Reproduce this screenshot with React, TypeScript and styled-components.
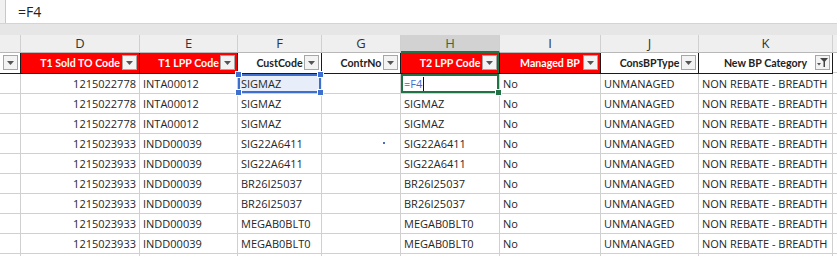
import * as React from 'react';
import styled, { createGlobalStyle, css } from 'styled-components';

const GlobalStyle = createGlobalStyle`
  html, body {
    margin: 0;
    padding: 0;
    background: #ffffff;
    overflow: hidden;
  }
  body {
    font-family: 'Open Sans', 'Noto Sans', 'Liberation Sans', sans-serif;
  }
`;

const COLS = '21px 119px 98px 84px 79px 99px 101px 98px 134px 1fr';

const Window = styled.div`
  width: 837px;
  height: 256px;
  overflow: hidden;
  background: #e6e6e6;
`;

const FormulaBar = styled.div`
  height: 24px;
  display: flex;
  border-bottom: 1px solid #d4d4d4;
  box-sizing: border-box;
`;

const FormulaEdge = styled.div`
  width: 5px;
  background: #f1f1f1;
  border-right: 1px solid #c8c8c8;
`;

const FormulaInput = styled.div`
  flex: 1;
  background: #ffffff;
  padding-left: 12px;
  font-size: 14px;
  line-height: 23px;
  color: #222;
`;

const Gap = styled.div`
  height: 11px;
  background: #e6e6e6;
`;

const Sheet = styled.div`
  display: grid;
  grid-template-columns: ${COLS};
  grid-auto-rows: auto;
  background: #ffffff;
`;

const Letter = styled.div<{ $active?: boolean }>`
  height: 18px;
  box-sizing: border-box;
  background: ${({ $active }) => ($active ? '#d2d2d2' : '#efefef')};
  border-right: 1px solid #d0d0d0;
  border-bottom: ${({ $active }) => ($active ? '2px solid #217346' : '1px solid #b8b8b8')};
  color: ${({ $active }) => ($active ? '#217346' : '#333')};
  font-size: 13px;
  line-height: 17px;
  text-align: center;
`;

const Head = styled.div<{ $red?: boolean; $active?: boolean }>`
  position: relative;
  height: 21px;
  box-sizing: border-box;
  background: ${({ $red }) => ($red ? '#ff0000' : '#ffffff')};
  color: ${({ $red }) => ($red ? '#ffffff' : '#222')};
  border-right: 1px solid #1a1a1a;
  border-bottom: 1px solid #1a1a1a;
  font-family: Lato, 'Open Sans', sans-serif;
  font-size: 10.6px;
  font-weight: 700;
  line-height: 20px;
  text-align: center;
  white-space: nowrap;
  ${({ $active }) =>
    $active &&
    css`
      box-shadow: inset 1px 0 0 #217346, inset -1px 0 0 #217346;
    `}
`;

const FilterButton = styled.div`
  position: absolute;
  right: 2px;
  top: 2px;
  width: 15px;
  height: 15px;
  box-sizing: border-box;
  background: #f3f3f3;
  border: 1px solid #a6a6a6;
  display: flex;
  align-items: center;
  justify-content: center;
`;

const Cell = styled.div<{ $num?: boolean }>`
  position: relative;
  height: 20px;
  box-sizing: border-box;
  border-right: 1px solid #d0d0d0;
  border-bottom: 1px solid #d0d0d0;
  padding: 0 3px;
  font-size: 11px;
  line-height: 20px;
  color: #262626;
  text-align: ${({ $num }) => ($num ? 'right' : 'left')};
  white-space: nowrap;
  overflow: hidden;
`;

const RangeCell = styled(Cell)`
  overflow: visible;
  background: #e8eef9;
  box-shadow: inset 0 0 0 2px #3e6fcf;
  border-right-color: transparent;
`;

const ActiveCell = styled(Cell)`
  overflow: visible;
  box-shadow: inset 0 0 0 2px #217346;
`;

const Handle = styled.span<{ $color: string; $x: 'left' | 'right'; $y: 'top' | 'bottom' }>`
  position: absolute;
  width: 5px;
  height: 5px;
  background: ${({ $color }) => $color};
  outline: 1px solid #ffffff;
  ${({ $x }) => ($x === 'left' ? 'left: -2px;' : 'right: -2px;')}
  ${({ $y }) => ($y === 'top' ? 'top: -2px;' : 'bottom: -2px;')}
  z-index: 2;
`;

const RefText = styled.span`
  color: #3e6fcf;
`;

const Caret = styled.span`
  display: inline-block;
  width: 1px;
  height: 14px;
  background: #111;
  vertical-align: -3px;
  margin-left: 1px;
`;

const Dot = styled.span`
  position: absolute;
  left: 61px;
  top: 8px;
  width: 2px;
  height: 2px;
  background: #4a6fb5;
`;

const Arrow = () => (
  <svg width="7" height="4" viewBox="0 0 7 4">
    <path d="M0 0h7L3.5 4z" fill="#555" />
  </svg>
);

const FunnelArrow = () => (
  <svg width="11" height="9" viewBox="0 0 11 9">
    <path d="M0 5h4L2 7.5z" fill="#555" />
    <path d="M3 0h8L8 3.5V9H6.5V3.5z" fill="#444" />
  </svg>
);

interface Column {
  letter: string;
  title: string;
  red?: boolean;
  filtered?: boolean;
}

const columns: Column[] = [
  { letter: 'C', title: '' },
  { letter: 'D', title: 'T1 Sold TO Code', red: true },
  { letter: 'E', title: 'T1 LPP Code', red: true },
  { letter: 'F', title: 'CustCode' },
  { letter: 'G', title: 'ContrNo' },
  { letter: 'H', title: 'T2 LPP Code', red: true },
  { letter: 'I', title: 'Managed BP', red: true },
  { letter: 'J', title: 'ConsBPType' },
  { letter: 'K', title: 'New BP Category', filtered: true },
];

const groups = [
  { sold: '1215022778', lpp: 'INTA00012', cust: 'SIGMAZ', count: 3 },
  { sold: '1215023933', lpp: 'INDD00039', cust: 'SIG22A6411', count: 2 },
  { sold: '1215023933', lpp: 'INDD00039', cust: 'BR26I25037', count: 2 },
  { sold: '1215023933', lpp: 'INDD00039', cust: 'MEGAB0BLT0', count: 2 },
];

const rows = groups.flatMap((g) => Array.from({ length: g.count }, () => g));

const App = () => {
  return (
    <Window>
      <GlobalStyle />
      <FormulaBar>
        <FormulaEdge />
        <FormulaInput>=F4</FormulaInput>
      </FormulaBar>
      <Gap />
      <Sheet>
        {columns.map((c) => (
          <Letter key={c.letter} $active={c.letter === 'H'}>
            {c.letter === 'C' ? '' : c.letter}
          </Letter>
        ))}
        <Letter />

        {columns.map((c) => (
          <Head key={c.letter} $red={c.red} $active={c.letter === 'H'}>
            {c.title}
            <FilterButton>{c.filtered ? <FunnelArrow /> : <Arrow />}</FilterButton>
          </Head>
        ))}
        <Cell />

        {rows.map((r, i) => (
          <React.Fragment key={i}>
            <Cell />
            <Cell $num>{r.sold}</Cell>
            <Cell>{r.lpp}</Cell>
            {i === 0 ? (
              <RangeCell>
                {r.cust}
                <Handle $color="#3e6fcf" $x="left" $y="top" />
                <Handle $color="#3e6fcf" $x="right" $y="top" />
                <Handle $color="#3e6fcf" $x="left" $y="bottom" />
                <Handle $color="#3e6fcf" $x="right" $y="bottom" />
              </RangeCell>
            ) : (
              <Cell>{r.cust}</Cell>
            )}
            <Cell>{i === 3 && <Dot />}</Cell>
            {i === 0 ? (
              <ActiveCell>
                =<RefText>F4</RefText>
                <Caret />
                <Handle $color="#217346" $x="right" $y="bottom" />
              </ActiveCell>
            ) : (
              <Cell>{r.cust}</Cell>
            )}
            <Cell>No</Cell>
            <Cell>UNMANAGED</Cell>
            <Cell>NON REBATE - BREADTH</Cell>
            <Cell />
          </React.Fragment>
        ))}
        {columns.map((c) => (
          <Cell key={`blank-${c.letter}`} />
        ))}
        <Cell />
      </Sheet>
    </Window>
  );
};

export default App;
